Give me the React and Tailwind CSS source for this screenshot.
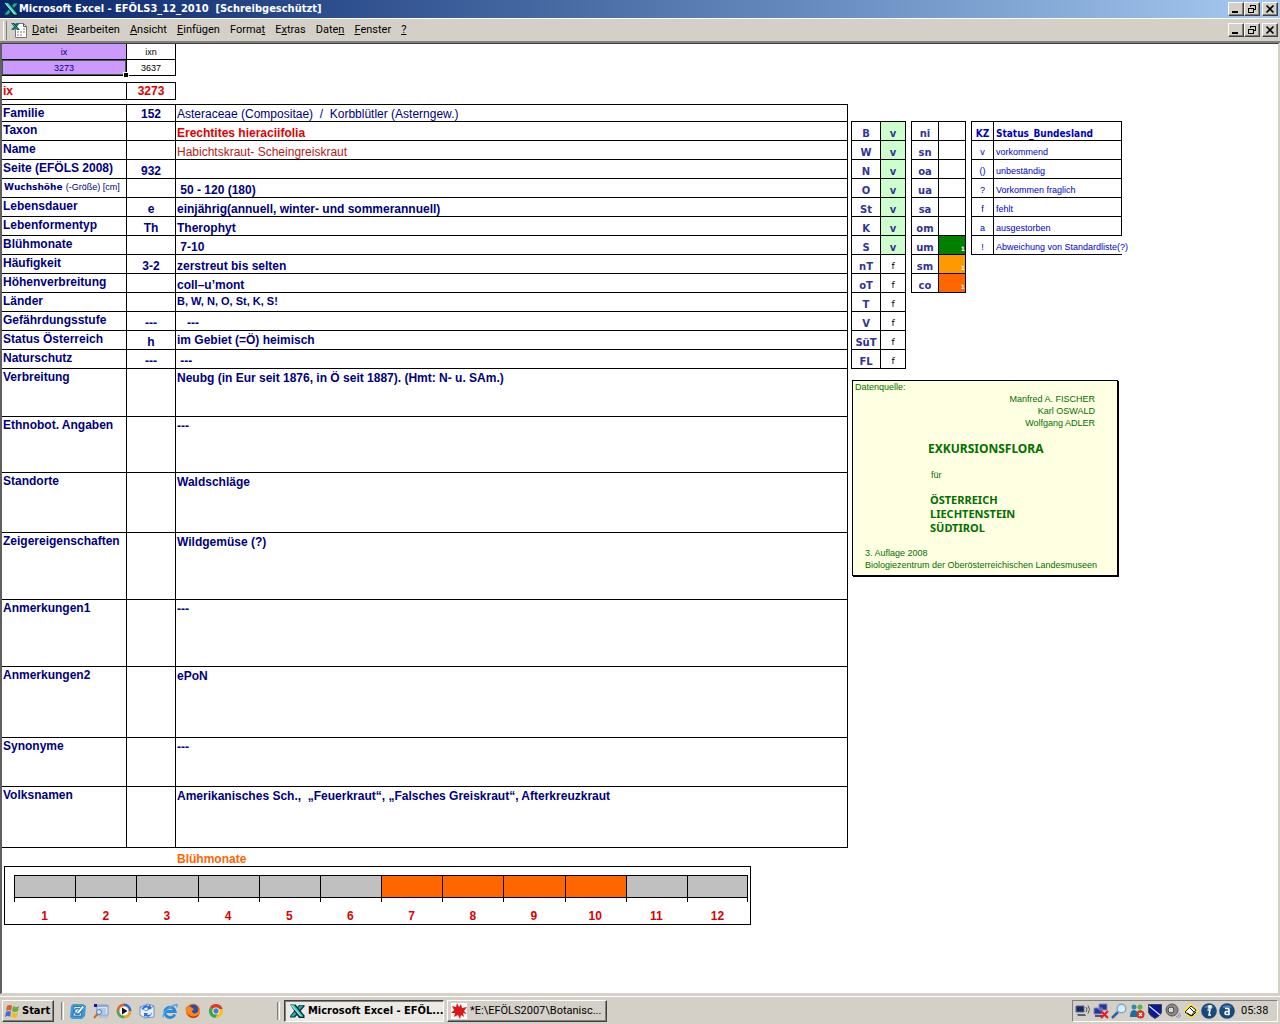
const rows = [
  { label: 'Familie', code: '152', value: 'Asteraceae (Compositae)\u00a0 /\u00a0 Korbblütler (Asterngew.)', height: 'h-[17px]', style: 'align-bottom leading-[14px] font-normal' },
  { label: 'Taxon', value: 'Erechtites hieraciifolia', style: 'align-bottom leading-[14px] text-[#dd0000]' },
  { label: 'Name', value: 'Habichtskraut- Scheingreiskraut', style: 'align-bottom leading-[14px] font-normal text-[#b52020]' },
  { label: 'Seite (EFÖLS 2008)', code: '932' },
  { label: 'Wuchshöhe', unit: '(-Größe) [cm]', value: '\u00a050 - 120 (180)' },
  { label: 'Lebensdauer', code: 'e', value: 'einjährig(annuell, winter- und sommerannuell)' },
  { label: 'Lebenformentyp', code: 'Th', value: 'Therophyt' },
  { label: 'Blühmonate', value: '\u00a07-10' },
  { label: 'Häufigkeit', code: '3-2', value: 'zerstreut bis selten' },
  { label: 'Höhenverbreitung', value: 'coll–u’mont' },
  { label: 'Länder', value: 'B, W, N, O, St, K, S!', style: 'align-top leading-4 text-[11px]' },
  { label: 'Gefährdungsstufe', code: '---', value: '\u00a0\u00a0\u00a0---' },
  { label: 'Status Österreich', code: 'h', value: 'im Gebiet (=Ö) heimisch', style: 'align-top leading-[18px]' },
  { label: 'Naturschutz', code: '---', value: '\u00a0---' },
  { label: 'Verbreitung', value: 'Neubg (in Eur seit 1876, in Ö seit 1887). (Hmt: N- u. SAm.)', height: 'h-[48px]' },
  { label: 'Ethnobot. Angaben', value: '---', height: 'h-[56px]' },
  { label: 'Standorte', value: 'Waldschläge', height: 'h-[60px]' },
  { label: 'Zeigereigenschaften', value: 'Wildgemüse (?)', height: 'h-[67px]' },
  { label: 'Anmerkungen1', value: '---', height: 'h-[67px]' },
  { label: 'Anmerkungen2', value: 'ePoN', height: 'h-[71px]' },
  { label: 'Synonyme', value: '---', height: 'h-[49px]' },
  { label: 'Volksnamen', value: 'Amerikanisches Sch.,\u00a0 „Feuerkraut“, „Falsches Greiskraut“, Afterkreuzkraut', height: 'h-[61px]' },
]

const laender = [
  ['B', 'v'], ['W', 'v'], ['N', 'v'], ['O', 'v'], ['St', 'v'], ['K', 'v'], ['S', 'v'],
  ['nT', 'f'], ['oT', 'f'], ['T', 'f'], ['V', 'f'], ['SüT', 'f'], ['FL', 'f'],
]

const stufen = [
  ['ni'], ['sn'], ['oa'], ['ua'], ['sa'], ['om'],
  ['um', 'bg-[#008000]'], ['sm', 'bg-[#ff9900]'], ['co', 'bg-[#ff6600]'],
]

const status = [
  ['v', 'vorkommend'],
  ['()', 'unbeständig'],
  ['?', 'Vorkommen fraglich'],
  ['f', 'fehlt'],
  ['a', 'ausgestorben'],
  ['!', 'Abweichung von Standardliste(?)'],
]

const menu = [
  ['', 'D', 'atei'], ['', 'B', 'earbeiten'], ['', 'A', 'nsicht'], ['', 'E', 'infügen'],
  ['Forma', 't', ''], ['E', 'x', 'tras'], ['Date', 'n', ''], ['', 'F', 'enster'], ['', '?', ''],
]

const months = [1, 2, 3, 4, 5, 6, 7, 8, 9, 10, 11, 12]

const raised = 'border border-t-white border-l-white border-r-[#404040] border-b-[#404040] shadow-[inset_-1px_-1px_0_#808080]'

function ExcelIcon({ className }) {
  return (
    <svg viewBox="0 0 16 16" className={className} aria-hidden="true">
      <path d="M10 2h5.500v1.500L6 14.500H1V13z" fill="#06393c" />
      <path d="M11 2.500h3.500L5 13.500H1.500z" fill="#2aa8a8" />
      <path d="M1 1.500h5.500l9 11v2.500H10z" fill="#042a2c" />
      <path d="M1.500 2H5l9.500 11.500H11z" fill="#38d0cc" />
      <path d="M2.500 2.500l9.500 11" stroke="#c8ffff" strokeWidth=".8" />
    </svg>
  )
}

function DocIcon() {
  return (
    <svg viewBox="0 0 16 16" className="size-4" aria-hidden="true">
      <path d="M4.500 1.500h8l3 3v11h-11z" fill="#fff" stroke="#777" />
      <path d="M12.500 1.500v3h3" fill="none" stroke="#555" />
      <path d="M6 9h2v2H6zM9 9h2v2H9zM12 9h2v2h-2zM6 12h2v2H6zM9 12h2v2H9zM12 6h2v2h-2z" fill="#c0c0c0" />
      <path d="M6 1h3L3 8H0z" fill="#0a7474" />
      <path d="M0 1h3l6 7H6z" fill="#053838" />
      <path d="M1.500 1.500l5.500 6" stroke="#3ad0d0" />
    </svg>
  )
}

function WindowButtons() {
  const button = `flex h-[14px] w-4 items-center justify-center bg-[#d4d0c8] ${raised}`
  return (
    <div className="flex shrink-0 pr-0.5">
      <button aria-label="Minimieren" className={button}>
        <svg viewBox="0 0 12 10" className="h-[10px] w-3"><path d="M2 7h6v2H2z" /></svg>
      </button>
      <button aria-label="Wiederherstellen" className={button}>
        <svg viewBox="0 0 12 10" className="h-[10px] w-3" fill="none" stroke="#000" shapeRendering="crispEdges">
          <path d="M4.500 3V1.500h5v4H8M4 1h6" />
          <path d="M2.500 4.500h5v4h-5zM2 4h6" />
        </svg>
      </button>
      <button aria-label="Schließen" className={`ml-0.5 ${button}`}>
        <svg viewBox="0 0 12 10" className="h-[10px] w-3"><path d="M2.500 1.500l7 7M9.500 1.500l-7 7" stroke="#000" strokeWidth="1.600" /></svg>
      </button>
    </div>
  )
}

function TitleBar() {
  return (
    <header className="flex h-[18px] items-center bg-linear-to-r from-[#0a246a] to-[#a6caf0] pl-[3px]">
      <ExcelIcon className="size-4" />
      <h1 className="grow truncate font-['DejaVu_Sans_Condensed','DejaVu_Sans',sans-serif] text-[11px] font-bold whitespace-pre text-white">Microsoft Excel - EFÖLS3_12_2010  [Schreibgeschützt]</h1>
      <WindowButtons />
    </header>
  )
}

function MenuBar() {
  return (
    <div className="flex h-[25px] items-center border-t border-b-2 border-t-white border-b-[#808080] bg-[#d4d0c8] pl-[3px]">
      <div className="mr-1 h-[19px] w-1 border-x border-l-white border-r-[#808080]" />
      <DocIcon />
      <nav className="flex grow font-[Roboto,sans-serif] text-[11px] leading-4">
        {menu.map(([before, key, after]) => (
          <button key={before + key + after} className="px-[5px]">
            {before}<span className="underline">{key}</span>{after}
          </button>
        ))}
      </nav>
      <WindowButtons />
    </div>
  )
}

function IndexTables() {
  return (
    <>
      <table className="w-[174px] table-fixed border-separate border-spacing-0 text-center text-[9px] leading-3">
        <colgroup><col className="w-[125px]" /><col /></colgroup>
        <thead>
          <tr className="h-4">
            <th className="border-r border-b border-black bg-[#cc99ff] p-0 font-normal text-[#000080]">ix</th>
            <th className="border-r border-b border-black p-0 font-normal">ixn</th>
          </tr>
        </thead>
        <tbody>
          <tr className="h-4">
            <td className="relative border-r border-b border-black bg-[#cc99ff] p-0 text-[#000080] shadow-[inset_0_0_0_1px_#465a46]">
              3273
              <span className="absolute -right-0.5 -bottom-0.5 size-1 bg-black outline outline-white" />
            </td>
            <td className="border-r border-b border-black p-0">3637</td>
          </tr>
        </tbody>
      </table>
      <table className="mt-1.5 w-[174px] table-fixed border-separate border-spacing-0 border-t border-black text-xs leading-4 font-bold text-[#dd0000]">
        <colgroup><col className="w-[125px]" /><col /></colgroup>
        <tbody>
          <tr className="h-[17px]">
            <th className="border-r border-b border-black p-0 pl-px text-left">ix</th>
            <td className="border-r border-b border-black p-0 text-center">3273</td>
          </tr>
        </tbody>
      </table>
    </>
  )
}

function SpeciesTable() {
  return (
    <table className="mt-1 w-full table-fixed border-separate border-spacing-0 border-t border-black text-xs font-bold text-[#000080]">
      <colgroup><col className="w-[125px]" /><col className="w-[49px]" /><col /></colgroup>
      <tbody>
        {rows.map(row => (
          <tr key={row.label} className={row.height || 'h-[19px]'}>
            <th className="border-r border-b border-black p-0 pl-px text-left align-top leading-4 whitespace-nowrap">
              {row.unit
                ? <span className="block pl-px font-['DejaVu_Sans',sans-serif] text-[9px]">{row.label} <span className="font-['Liberation_Sans',Arial,sans-serif] font-normal">{row.unit}</span></span>
                : row.label}
            </th>
            <td className="border-r border-b border-black p-0 text-center align-bottom leading-[14px]">{row.code}</td>
            <td className={`border-r border-b border-black p-0 pl-px ${row.style || (row.height ? 'align-top leading-[18px]' : 'align-bottom leading-[14px]')}`}>{row.value}</td>
          </tr>
        ))}
      </tbody>
    </table>
  )
}

function MonthChart() {
  return (
    <section className="mt-1 mr-[97px] ml-0.5 text-xs font-bold">
      <h2 className="pl-[173px] leading-[14px] text-[#ff6600]">Blühmonate</h2>
      <div className="border border-black px-0.5 pt-2">
        <ol className="ml-[7px] flex text-center text-[#dd0000]">
          {months.map(m => (
            <li key={m} className="group min-w-0 flex-1">
              <div className={`h-[23px] border-y border-l border-black group-last:border-r ${m >= 7 && m <= 10 ? 'bg-[#ff6600]' : 'bg-[#c0c0c0]'}`} />
              <div className="h-1 border-l border-black group-last:border-r" />
              <div className="pt-1.5 leading-4">{m}</div>
            </li>
          ))}
        </ol>
      </div>
    </section>
  )
}

function KeyTables() {
  const table = "table-fixed border-separate border-spacing-0 border-t border-l border-black font-['DejaVu_Sans',sans-serif] text-[10px] leading-[13px]"
  const cell = 'border-r border-b border-black p-0 align-bottom'
  return (
    <div className="flex items-start gap-[5px]">
      <table className={`${table} w-[55px] text-center text-[#333399]`}>
        <colgroup><col className="w-[29px]" /><col /></colgroup>
        <tbody>
          {laender.map(([land, kz]) => (
            <tr key={land} className="h-[19px]">
              <th className={cell}>{land}</th>
              {kz === 'v'
                ? <td className={`${cell} bg-[#ccffcc] font-bold`}>v</td>
                : <td className={`${cell} text-[9px] text-black`}>f</td>}
            </tr>
          ))}
        </tbody>
      </table>
      <table className={`${table} w-[55px] text-center text-[#333399]`}>
        <colgroup><col className="w-[27px]" /><col /></colgroup>
        <tbody>
          {stufen.map(([stufe, color]) => (
            <tr key={stufe} className="h-[19px]">
              <th className={cell}>{stufe}</th>
              <td className={`${cell} text-right text-[6px] leading-[10px] font-bold text-white ${color || ''}`}>{color && '1'}</td>
            </tr>
          ))}
        </tbody>
      </table>
      <table className={`${table} w-[151px] text-[#0000cc]`}>
        <colgroup><col className="w-[22px]" /><col /></colgroup>
        <thead>
          <tr className="h-[19px] font-['DejaVu_Sans_Condensed','DejaVu_Sans',sans-serif]">
            <th className={cell}>KZ</th>
            <th className={`${cell} pl-0.5 text-left`}>Status_Bundesland</th>
          </tr>
        </thead>
        <tbody className="font-['Liberation_Sans',Arial,sans-serif] text-[9px]">
          {status.map(([kz, text]) => (
            <tr key={kz} className="h-[19px]">
              <td className={`${cell} text-center`}>{kz}</td>
              <td className={`border-b border-black p-0 pl-0.5 align-bottom whitespace-nowrap ${kz === '!' ? '' : 'border-r'}`}>{text}</td>
            </tr>
          ))}
        </tbody>
      </table>
    </div>
  )
}

function SourceBox() {
  return (
    <aside className="mt-[11px] ml-px w-[266px] border border-black bg-[#ffffe1] px-0.5 pb-1 text-[9px] leading-3 text-[#007000] shadow-[1px_1px_0_#000]">
      <p>Datenquelle:</p>
      <div className="pr-5 text-right">
        <p>Manfred A. FISCHER</p>
        <p>Karl OSWALD</p>
        <p>Wolfgang ADLER</p>
      </div>
      <h2 className="mt-3 pl-[73px] font-['Noto_Sans',sans-serif] text-xs leading-4 font-bold">EXKURSIONSFLORA</h2>
      <p className="mt-3 pl-[76px]">für</p>
      <p className="mt-3 pl-[75px] font-['Noto_Sans',sans-serif] text-[11px] leading-[14px] font-bold">
        ÖSTERREICH<br />LIECHTENSTEIN<br />SÜDTIROL
      </p>
      <p className="mt-3 pl-2.5 whitespace-nowrap">3. Auflage 2008<br />Biologiezentrum der Oberösterreichischen Landesmuseen</p>
    </aside>
  )
}

function Icon({ children }) {
  return <svg viewBox="0 0 16 16" className="size-4 shrink-0" aria-hidden="true">{children}</svg>
}

const quickLaunch = [
  ['Desktop', <>
    <path d="M3 1h10l3 2-1 10-3 3H2l-2-2L1 3z" fill="#3c9bd6" />
    <path d="M4 3.500h8L11.500 13H3z" fill="#e8f6ff" stroke="#1a5f9c" strokeWidth=".8" />
    <circle cx="7.500" cy="8.500" r="3" fill="none" stroke="#2f7fc0" strokeWidth="1.300" />
    <path d="M7 9l5.500-6.500 2 1.500L9 10.500l-2.500.500z" fill="#fff" stroke="#146aa8" strokeWidth=".8" />
  </>],
  ['Suche', <>
    <path d="M4 2h11v10H4z" fill="#dce9fa" stroke="#7d9ac7" />
    <path d="M4 2h11v2H4z" fill="#8aa8dc" />
    <path d="M1 1h3v3H1z" fill="#1010a0" />
    <path d="M6 6h7M6 8h7M8 10h5" stroke="#8fa8d0" />
    <path d="M6 14h9" stroke="#a8b4c8" />
    <circle cx="6" cy="9" r="2.500" fill="#bfe4ff" stroke="#5580b0" />
    <path d="M4.500 11L1 15" stroke="#c06a30" strokeWidth="2" />
  </>],
  ['Media Player', <>
    <path d="M8 .5A7.500 7.500 0 0 0 .5 8H8z" fill="#e8602a" />
    <path d="M8 .5A7.500 7.500 0 0 1 15.500 8H8z" fill="#2a6ad0" />
    <path d="M.5 8A7.500 7.500 0 0 0 8 15.500V8z" fill="#4ca64c" />
    <path d="M15.500 8A7.500 7.500 0 0 1 8 15.500V8z" fill="#f0a020" />
    <circle cx="8" cy="8" r="4.800" fill="#fff" stroke="#999" strokeWidth=".5" />
    <path d="M6 4.500v7L11.500 8z" fill="#111" />
  </>],
  ['Outlook Express', <>
    <path d="M1 4l8-3 6 2v11l-9 1-5-3z" fill="#e8f1fb" stroke="#6d92c4" />
    <path d="M1 4l6 4 8-5" fill="none" stroke="#6d92c4" />
    <path d="M3 7c0-4 4-6 7-4l1-2 1.500 5-4.500.500 1-1.500c-2-1-3 0-6 2z" fill="#2a72d8" />
    <path d="M13 9c0 4-4 6-7 4l-1 1.500V10h4l-1 1.500c2 1 4 0 5-2.500z" fill="#2a72d8" />
  </>],
  ['Internet Explorer', <>
    <path d="M12.800 11.500A5.200 5.200 0 1 1 13.200 8.500H4" fill="none" stroke="#2b8ad8" strokeWidth="2.800" />
    <path d="M1.500 14.500C-.5 12 6 3.500 14.500 1.500c1.500 0 .5 2 0 3" fill="none" stroke="#4ea6ea" strokeWidth="1.300" />
  </>],
  ['Firefox', <>
    <circle cx="8" cy="8" r="7.200" fill="#e86a10" />
    <circle cx="8.500" cy="6.500" r="4.800" fill="#2c4da8" />
    <path d="M1 3l1 2c2-2 4-1 5 0l2 1-2 2c0 3 4 3 6 1 1-2 1-4 0-6 4 4 2 12-5 12C2 15-.5 9 1 3z" fill="#f58a1a" />
    <path d="M2 9c2 5 8 6 12 2-2 6-11 5-12-2z" fill="#c83a0a" />
  </>],
  ['Chrome', <>
    <circle cx="8" cy="8" r="7" fill="#f2c21c" />
    <path d="M8 8L2 4.300A7 7 0 0 1 14.600 6H8z" fill="#de3a2c" />
    <path d="M8 8L2 4.300A7 7 0 0 0 7 15l3.500-5z" fill="#3ba64c" />
    <circle cx="8" cy="8" r="3.600" fill="#fff" />
    <circle cx="8" cy="8" r="2.700" fill="#3f82d8" />
  </>],
]

const tray = [
  <>
    <path d="M1 3h8v6H1z" fill="#15285e" stroke="#5a6a9a" />
    <path d="M2 11h8l1 2H3z" fill="#55607c" />
    <path d="M11 4q2 2 0 5M13 2.500q3 3.500 0 8" fill="none" stroke="#555" />
  </>,
  <>
    <path d="M6 1h8v6H6zM1 5h8v6H1z" fill="#2434a0" stroke="#8090c0" />
    <path d="M2 13h8" stroke="#556" strokeWidth="2" />
    <path d="M8 8l7 7M15 8l-7 7" stroke="#e02020" strokeWidth="2.200" />
  </>,
  <>
    <path d="M7 9l-6 6" stroke="#2b5ea8" strokeWidth="2.500" />
    <circle cx="10.500" cy="5.500" r="4.300" fill="#d8f0ff" stroke="#7aa6d8" strokeWidth="1.400" />
  </>,
  <>
    <circle cx="5" cy="4" r="2.500" fill="#2c8fa8" /><circle cx="11" cy="4" r="2.500" fill="#5fb04c" />
    <path d="M1 14q0-7 4-7t4 7z" fill="#1d6f9a" /><path d="M8 12q0-5 3-5t4 5z" fill="#55a348" />
    <circle cx="11.500" cy="11.500" r="4" fill="#dc2c20" />
    <path d="M10 10l3 3M13 10l-3 3" stroke="#fff" strokeWidth="1.200" />
  </>,
  <>
    <path d="M1.500 1.500h13v8q-1 3-6.500 6-5.500-3-6.500-6z" fill="#0a1a9c" stroke="#444" />
    <path d="M2 3l11 9" stroke="#dfe4ff" strokeWidth="1.200" />
  </>,
  <>
    <circle cx="7" cy="7" r="6" fill="#8a8a8a" stroke="#555" />
    <circle cx="6" cy="7" r="3" fill="#d8d8d8" stroke="#444" />
    <path d="M11 14q3-1 4-4M13 15q2-1 3-3" fill="none" stroke="#8080d0" />
  </>,
  <>
    <path d="M8 0l8 8-8 8-8-8z" fill="#f4e830" />
    <path d="M2 9l6-6 5 4-5 6z" fill="#fff" stroke="#111" />
    <path d="M4 10l5 3 4-4M7 5l4 4" fill="none" stroke="#111" />
  </>,
  <>
    <circle cx="8" cy="8" r="7.800" fill="#17497c" />
    <path d="M3 4q5-4 10 0-5 3-10 0" fill="#4c80b0" />
    <path d="M8 3h2v2H8zM6.500 7H9l-1 5h2" fill="none" stroke="#fff" strokeWidth="1.500" />
  </>,
  <>
    <circle cx="8" cy="8" r="7.800" fill="#17497c" />
    <path d="M3 4q5-4 10 0-5 3-10 0" fill="#4c80b0" />
    <path d="M6 5.500h3q1 0 1 1V12M10 8.500H7.500q-1.500 0-1.500 1.500t1.500 1.500H10" fill="none" stroke="#fff" strokeWidth="1.600" />
  </>,
]

function Taskbar() {
  const grip = 'h-[18px] w-[3px] shrink-0 border-x border-l-[#808080] border-r-white'
  return (
    <footer className="flex h-7 shrink-0 items-center border-t border-white bg-[#d4d0c8] px-0.5 font-[Roboto,sans-serif] text-[11px] leading-4">
      <button className={`flex h-[22px] w-[52px] items-center gap-px bg-[#d4d0c8] pl-0.5 font-['DejaVu_Sans_Condensed','DejaVu_Sans',sans-serif] font-bold ${raised}`}>
        <Icon>
          <path d="M2 3q3-2 5 0L6 8Q4 6 1 8z" fill="#e25a28" />
          <path d="M8 3q3 2 6 0l-1 5q-3 2-6 0z" fill="#62b040" />
          <path d="M1 9q3-2 5 0l-1 5q-2-2-5 0z" fill="#3f72d8" />
          <path d="M7 9q3 2 6 0l-1 5q-3 2-6 0z" fill="#f0bc28" />
        </Icon>
        Start
      </button>
      <div className={`ml-[7px] ${grip}`} />
      <div className="ml-1.5 flex gap-[7px]">
        {quickLaunch.map(([name, icon]) => <button key={name} aria-label={name}><Icon>{icon}</Icon></button>)}
      </div>
      <div className={`ml-[53px] ${grip}`} />
      <div className="ml-1 flex min-w-0 gap-[3px]">
        <button className="flex h-[22px] w-[160px] items-center gap-[3px] border border-t-[#404040] border-r-white border-b-white border-l-[#404040] bg-[#ebe9e4] pl-1 font-['DejaVu_Sans_Condensed','DejaVu_Sans',sans-serif] font-bold shadow-[inset_1px_1px_0_#808080]">
          <ExcelIcon className="size-4 shrink-0" />
          <span className="whitespace-nowrap">Microsoft Excel - EFÖL...</span>
        </button>
        <button className={`flex h-[22px] w-[160px] items-center gap-[3px] bg-[#d4d0c8] pl-[3px] ${raised}`}>
          <Icon>
            <path d="M0 0h16v16H0z" fill="#fff" />
            <path d="M6 0l2 4 2-3 1 4 5-1-3 4 3 3-4-1 1 4-3-2-1 4-2-4-4 2 1-4-4 0 3-3-2-4 4 1z" fill="#dc1818" />
          </Icon>
          <span className="whitespace-nowrap">*E:\EFÖLS2007\Botanisc...</span>
        </button>
      </div>
      <div className="ml-auto flex h-[22px] w-[206px] shrink-0 items-center gap-0.5 border border-t-[#808080] border-r-white border-b-white border-l-[#808080] pl-0.5">
        {tray.map((icon, i) => <Icon key={i}>{icon}</Icon>)}
        <time className="ml-1">05:38</time>
      </div>
    </footer>
  )
}

export default function App() {
  return (
    <div className="flex min-h-screen flex-col bg-[#d4d0c8] font-['Liberation_Sans',Arial,sans-serif] text-black">
      <TitleBar />
      <MenuBar />
      <main className="mr-px mb-0.5 flex grow items-start border-t border-r border-b border-l-2 border-t-[#404040] border-r-[#d4d0c8] border-b-[#d4d0c8] border-l-[#606060] bg-white">
        <div className="min-w-0 flex-1">
          <IndexTables />
          <SpeciesTable />
          <MonthChart />
        </div>
        <div className="w-[430px] shrink-0 pt-[77px] pl-[3px]">
          <KeyTables />
          <SourceBox />
        </div>
      </main>
      <Taskbar />
    </div>
  )
}
